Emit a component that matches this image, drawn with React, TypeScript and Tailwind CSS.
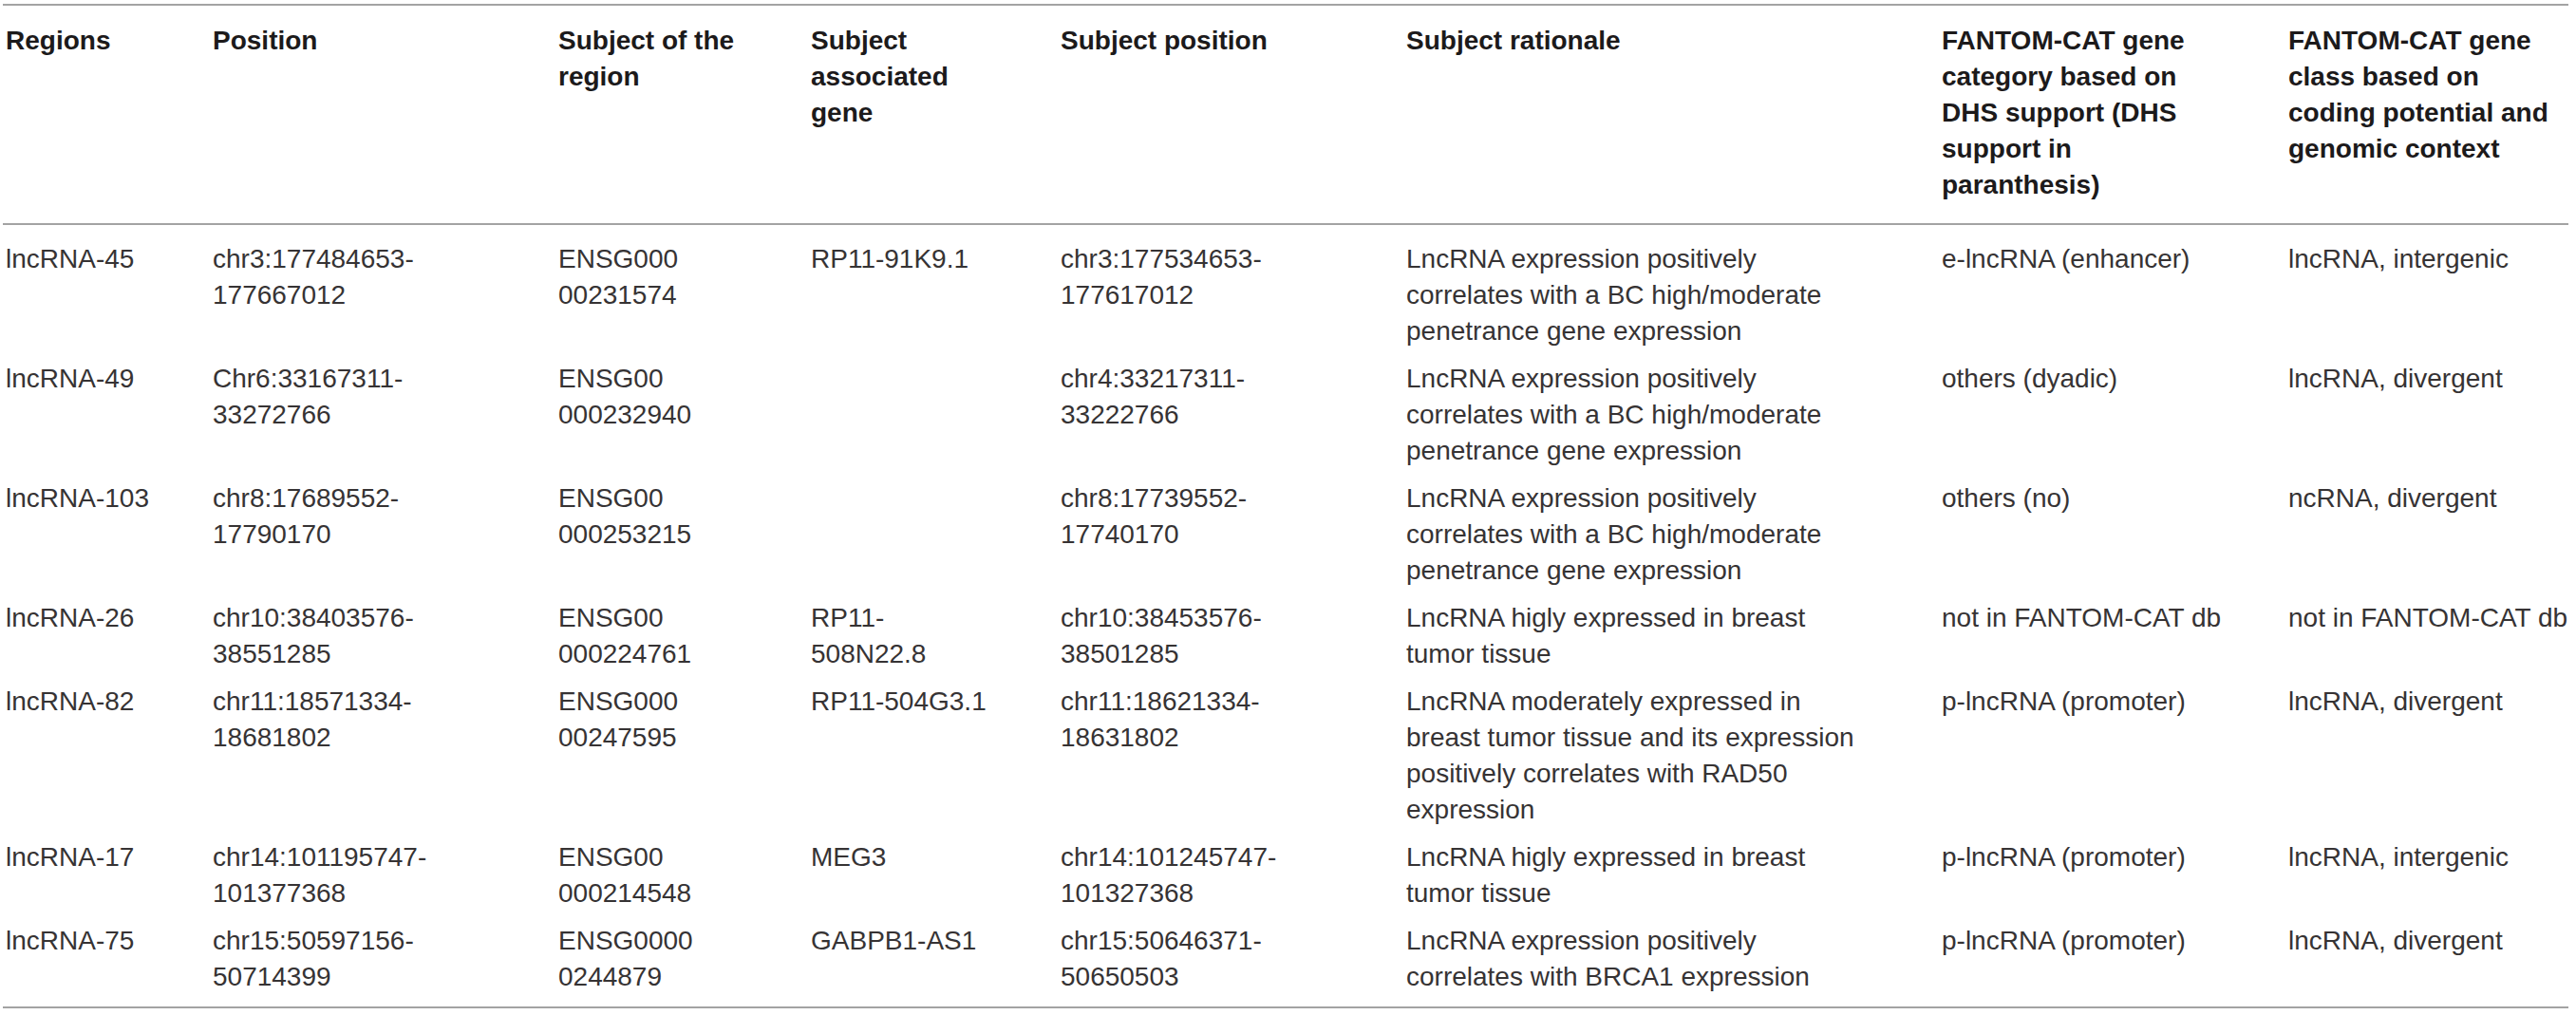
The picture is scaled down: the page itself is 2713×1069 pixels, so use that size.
import React from "react";

type Row = {
  region: string;
  position: string[];
  subject: string[];
  gene: string[];
  subjPos: string[];
  rationale: string[];
  category: string;
  cls: string;
};

const rows: Row[] = [
  {
    region: "lncRNA-45",
    position: ["chr3:177484653-", "177667012"],
    subject: ["ENSG000", "00231574"],
    gene: ["RP11-91K9.1"],
    subjPos: ["chr3:177534653-", "177617012"],
    rationale: [
      "LncRNA expression positively",
      "correlates with a BC high/moderate",
      "penetrance gene expression",
    ],
    category: "e-lncRNA (enhancer)",
    cls: "lncRNA, intergenic",
  },
  {
    region: "lncRNA-49",
    position: ["Chr6:33167311-", "33272766"],
    subject: ["ENSG00", "000232940"],
    gene: [],
    subjPos: ["chr4:33217311-", "33222766"],
    rationale: [
      "LncRNA expression positively",
      "correlates with a BC high/moderate",
      "penetrance gene expression",
    ],
    category: "others (dyadic)",
    cls: "lncRNA, divergent",
  },
  {
    region: "lncRNA-103",
    position: ["chr8:17689552-", "17790170"],
    subject: ["ENSG00", "000253215"],
    gene: [],
    subjPos: ["chr8:17739552-", "17740170"],
    rationale: [
      "LncRNA expression positively",
      "correlates with a BC high/moderate",
      "penetrance gene expression",
    ],
    category: "others (no)",
    cls: "ncRNA, divergent",
  },
  {
    region: "lncRNA-26",
    position: ["chr10:38403576-", "38551285"],
    subject: ["ENSG00", "000224761"],
    gene: ["RP11-", "508N22.8"],
    subjPos: ["chr10:38453576-", "38501285"],
    rationale: ["LncRNA higly expressed in breast", "tumor tissue"],
    category: "not in FANTOM-CAT db",
    cls: "not in FANTOM-CAT db",
  },
  {
    region: "lncRNA-82",
    position: ["chr11:18571334-", "18681802"],
    subject: ["ENSG000", "00247595"],
    gene: ["RP11-504G3.1"],
    subjPos: ["chr11:18621334-", "18631802"],
    rationale: [
      "LncRNA moderately expressed in",
      "breast tumor tissue and its expression",
      "positively correlates with RAD50",
      "expression",
    ],
    category: "p-lncRNA (promoter)",
    cls: "lncRNA, divergent",
  },
  {
    region: "lncRNA-17",
    position: ["chr14:101195747-", "101377368"],
    subject: ["ENSG00", "000214548"],
    gene: ["MEG3"],
    subjPos: ["chr14:101245747-", "101327368"],
    rationale: ["LncRNA higly expressed in breast", "tumor tissue"],
    category: "p-lncRNA (promoter)",
    cls: "lncRNA, intergenic",
  },
  {
    region: "lncRNA-75",
    position: ["chr15:50597156-", "50714399"],
    subject: ["ENSG0000", "0244879"],
    gene: ["GABPB1-AS1"],
    subjPos: ["chr15:50646371-", "50650503"],
    rationale: ["LncRNA expression positively", "correlates with BRCA1 expression"],
    category: "p-lncRNA (promoter)",
    cls: "lncRNA, divergent",
  },
];

const headers: string[][] = [
  ["Regions"],
  ["Position"],
  ["Subject of the", "region"],
  ["Subject", "associated", "gene"],
  ["Subject position"],
  ["Subject rationale"],
  ["FANTOM-CAT gene", "category based on", "DHS support (DHS", "support in", "paranthesis)"],
  ["FANTOM-CAT gene", "class based on", "coding potential and", "genomic context"],
];

const grid =
  "grid grid-cols-[218px_364px_266px_263px_364px_564px_365px_298px]";

function Lines({ lines }: { lines: string[] }) {
  return (
    <div className="pl-[3px] whitespace-nowrap">
      {lines.map((l, i) => (
        <div key={i}>{l}</div>
      ))}
    </div>
  );
}

export default function App() {
  return (
    <div
      className="w-[2713px] h-[1069px] bg-white pt-[4px] pl-[3px] text-[28px] leading-[38px] text-[#363334]"
      style={{ fontFamily: '"Liberation Sans", Arial, sans-serif' }}
    >
      <div className="w-[2702px] border-t-2 border-b-2 border-[#a3a3a3]">
        <div
          className={`${grid} border-b-2 border-[#a3a3a3] pt-[18px] pb-[21px] font-bold text-[#1c1a1b]`}
        >
          {headers.map((h, i) => (
            <Lines key={i} lines={h} />
          ))}
        </div>
        <div className="pt-[11px] pb-[6px]">
          {rows.map((r) => (
            <div key={r.region} className={`${grid} py-[6px]`}>
              <Lines lines={[r.region]} />
              <Lines lines={r.position} />
              <Lines lines={r.subject} />
              <Lines lines={r.gene} />
              <Lines lines={r.subjPos} />
              <Lines lines={r.rationale} />
              <Lines lines={[r.category]} />
              <Lines lines={[r.cls]} />
            </div>
          ))}
        </div>
      </div>
    </div>
  );
}
